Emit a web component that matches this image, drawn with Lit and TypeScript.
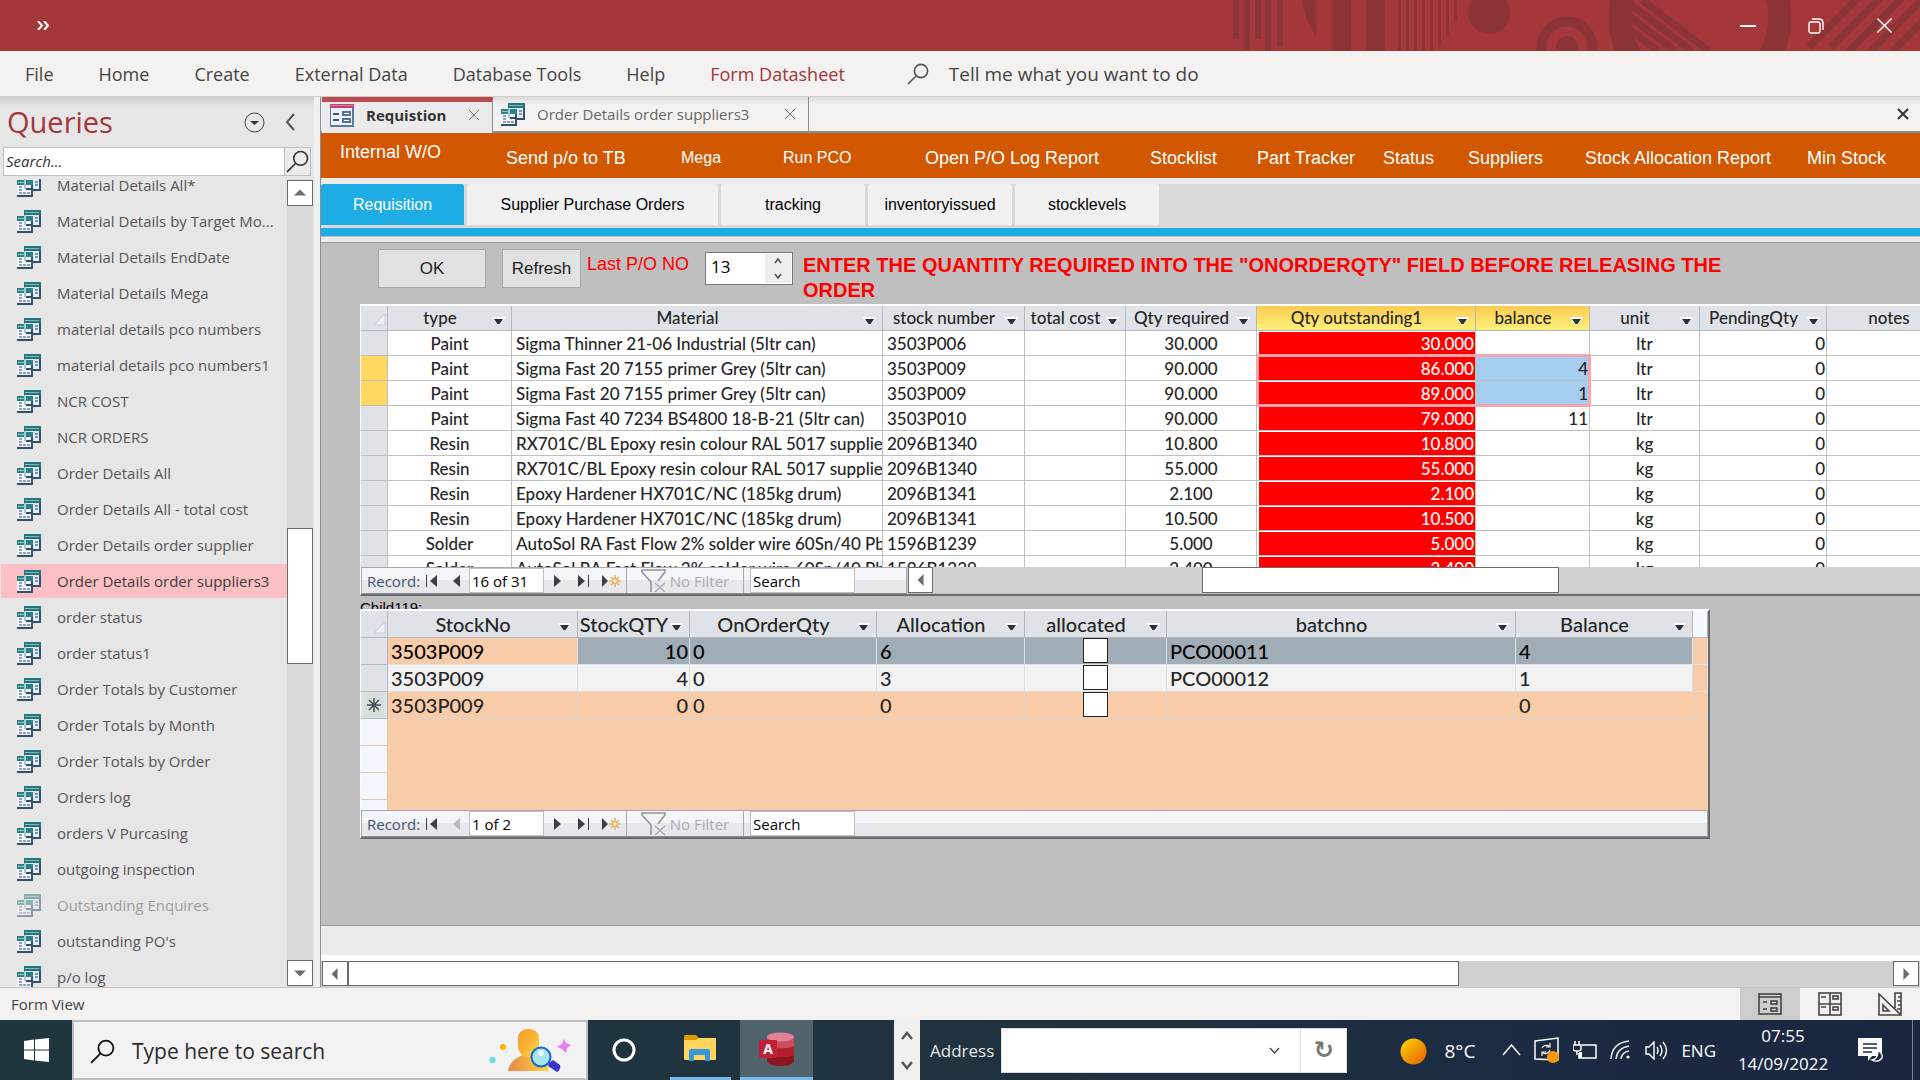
import { LitElement, html, css, svg, nothing } from "lit";
import { customElement } from "lit/decorators.js";
import { classMap } from "lit/directives/class-map.js";

const base = css`
  * { box-sizing: border-box; }
  button { border: 0; background: none; padding: 0; margin: 0; font: inherit; color: inherit; cursor: default; }
  input { border: 0; padding: 0; margin: 0; font: inherit; color: inherit; border-radius: 0; outline: 0; min-width: 0; }
  a { color: inherit; text-decoration: none; }
  svg { display: block; flex: none; }
`;

const queryIcon = html`<svg width="24" height="23" viewBox="0 0 24 23" shape-rendering="crispEdges">
  <rect x="7" y="0" width="17" height="17" fill="#34506f"/>
  <rect x="7" y="4" width="15" height="11" fill="#e4ebf7"/>
  <rect x="7" y="0" width="17" height="5" fill="#24757c"/>
  <rect x="8" y="2" width="14" height="1" fill="#7fb9b9"/>
  <g fill="#7f95bd"><rect x="18" y="7" width="3" height="2"/><rect x="18" y="10" width="3" height="2"/></g>
  <rect x="0" y="6" width="16" height="17" fill="#34506f"/>
  <rect x="0" y="10" width="14" height="11" fill="#f4f7fc"/>
  <rect x="0" y="6" width="16" height="5" fill="#2d8383"/>
  <rect x="1" y="8" width="8" height="1" fill="#8cc4c2"/>
  <rect x="7" y="5" width="2" height="10" fill="#b4c3de"/>
  <rect x="9" y="14" width="7" height="2" fill="#34506f"/>
  <g fill="#8fa2c6"><rect x="2" y="12" width="3" height="2"/><rect x="2" y="15" width="3" height="2"/><rect x="2" y="18" width="3" height="2"/><rect x="6" y="18" width="3" height="2"/><rect x="10" y="18" width="3" height="2"/></g>
</svg>`;

const formIcon = html`<svg width="24" height="23" viewBox="0 0 24 23">
  <rect x="0" y="0" width="24" height="23" fill="#5a76a6"/>
  <rect x="1" y="4" width="21" height="17" fill="#eef2fa"/>
  <rect x="0" y="0" width="24" height="4" fill="#c2406f"/>
  <rect x="1" y="1" width="22" height="1" fill="#dd86a3"/>
  <g fill="#3d5480"><rect x="3" y="9" width="6" height="2"/><rect x="3" y="15" width="6" height="2"/></g>
  <g fill="#fff" stroke="#5570a0" stroke-width="2"><rect x="13" y="8" width="7" height="3"/><rect x="13" y="15" width="7" height="3"/></g>
</svg>`;

const magnifier = (size: number, color: string) => html`<svg width=${size} height=${size} viewBox="0 0 22 22" fill="none" stroke=${color} stroke-width="1.6"><circle cx="14" cy="8" r="6.6"/><path d="M9.3 12.7 1 21"/></svg>`;

const cross = (size: number, color: string, w = 1) => html`<svg width=${size} height=${size} viewBox="0 0 12 12" stroke=${color} stroke-width=${w}><path d="M1 1 11 11M11 1 1 11"/></svg>`;

const arrow = (dir: string, color = "#6b6b6b") => {
  const d: Record<string, string> = { up: "M0 10 7 3 14 10Z", down: "M0 4 7 11 14 4Z", left: "M10 0 3 7 10 14Z", right: "M4 0 11 7 4 14Z" };
  return html`<svg width="12" height="12" viewBox="0 0 14 14" fill=${color}><path d=${d[dir]}/></svg>`;
};

const sortMark = html`<svg width="13" height="9" viewBox="0 0 13 9"><path d="M0 0H13V1L8 7H5L0 1Z" fill="#fff"/><path d="M2 2H11L7.5 7H5.5Z" fill="#2b313c"/></svg>`;

@customElement("record-nav")
class RecordNav extends LitElement {
  static properties = { position: {}, atStart: { type: Boolean } };
  declare position: string; declare atStart: boolean;
  static styles = [base, css`
    :host { display: flex; height: 27px; border: 1px solid #a5a9b5; border-bottom-color: #8c8f98; background: linear-gradient(#f4f5f8 50%, #e6e8ec 50%); font: 15px "Open Sans", sans-serif; color: #44546a; }
    .cell { display: flex; align-items: center; justify-content: center; }
    .label { width: 59px; padding-left: 5px; justify-content: flex-start; }
    .first { width: 22px; } .prev, .next { width: 26px; } .last, .new { width: 28px; }
    .box { height: 25px; border: 1px solid #bfbfbf; background: #fff; color: #000; padding: 0 2px; }
    .pos { width: 75px; } .find { width: 105px; margin-left: 6px; }
    .filter { width: 118px; gap: 4px; border: solid #a5a9b5; border-width: 0 1px; color: #a9acb2; }
    .find::placeholder { color: #000; opacity: 1; }
  `];
  render() {
    const p = this.atStart ? "#b5b9c0" : "#3b3f48";
    return html`
      <label class="cell label" for="pos">Record:</label>
      <button class="cell first" aria-label="First record"><svg width="12" height="12" viewBox="0 0 12 12" fill="#3b3f48"><path d="M0 0H1V12H0ZM11 0V12L4 6Z"/></svg></button>
      <button class="cell prev" aria-label="Previous record"><svg width="7" height="12" viewBox="0 0 7 12" fill=${p}><path d="M7 0V12L0 6Z"/></svg></button>
      <input class="box pos" id="pos" .value=${this.position}>
      <button class="cell next" aria-label="Next record"><svg width="7" height="12" viewBox="0 0 7 12" fill="#3b3f48"><path d="M0 0V12L7 6Z"/></svg></button>
      <button class="cell last" aria-label="Last record"><svg width="12" height="12" viewBox="0 0 12 12" fill="#3b3f48"><path d="M0 0V12L7 6ZM10 0H11V12H10Z"/></svg></button>
      <button class="cell new" aria-label="New record"><svg width="20" height="12" viewBox="0 0 20 12"><path d="M0 0V12L6 6Z" fill="#3b3f48"/><g stroke="#e9b665" stroke-width="1.6" fill="#fff"><path d="M13 0V12M7 6H19M9 2 17 10M17 2 9 10"/><circle cx="13" cy="6" r="2.4"/></g></svg></button>
      <button class="cell filter"><svg width="25" height="24" viewBox="0 0 25 24" fill="none" stroke="#8f9298" stroke-width="1.5"><path d="M10 23V13L1 3V1H24V3L17 12"/><path d="M14 14 24 23M24 14 14 23" stroke="#a9acb2"/></svg>No Filter</button>
      <input class="box find" aria-label="Search records" placeholder="Search">
    `;
  }
}

const materialRows: string[][] = [
  ["Paint", "Sigma Thinner 21-06 Industrial (5ltr can)", "3503P006", "", "30.000", "30.000", "", "ltr", "0", ""],
  ["Paint", "Sigma Fast 20 7155 primer Grey (5ltr can)", "3503P009", "", "90.000", "86.000", "4", "ltr", "0", ""],
  ["Paint", "Sigma Fast 20 7155 primer Grey (5ltr can)", "3503P009", "", "90.000", "89.000", "1", "ltr", "0", ""],
  ["Paint", "Sigma Fast 40 7234 BS4800 18-B-21 (5ltr can)", "3503P010", "", "90.000", "79.000", "11", "ltr", "0", ""],
  ["Resin", "RX701C/BL Epoxy resin colour RAL 5017 supplied", "2096B1340", "", "10.800", "10.800", "", "kg", "0", ""],
  ["Resin", "RX701C/BL Epoxy resin colour RAL 5017 supplied", "2096B1340", "", "55.000", "55.000", "", "kg", "0", ""],
  ["Resin", "Epoxy Hardener HX701C/NC (185kg drum)", "2096B1341", "", "2.100", "2.100", "", "kg", "0", ""],
  ["Resin", "Epoxy Hardener HX701C/NC (185kg drum)", "2096B1341", "", "10.500", "10.500", "", "kg", "0", ""],
  ["Solder", "AutoSol RA Fast Flow 2% solder wire 60Sn/40 Pb", "1596B1239", "", "5.000", "5.000", "", "kg", "0", ""],
  ["Solder", "AutoSol RA Fast Flow 2% solder wire 60Sn/40 Pb", "1596B1239", "", "2.400", "2.400", "", "kg", "0", ""],
];
const materialCols: [string, number, string][] = [
  ["type", 124, "mid"], ["Material", 371, ""], ["stock number", 142, ""], ["total cost", 101, ""], ["Qty required", 131, "mid"],
  ["Qty outstanding1", 219, "end red"], ["balance", 114, "end"], ["unit", 110, "mid"], ["PendingQty", 127, "end"], ["notes", 144, ""],
];

@customElement("material-sheet")
class MaterialSheet extends LitElement {
  static styles = [base, css`
    :host { display: block; border: 2px solid #fff; border-left-width: 1px; border-right: 0; border-bottom: 2px solid #6c6c6c; font: 500 17px "Comic Sans MS", Lato, sans-serif; color: #262626; overflow: hidden; }
    .view { height: 261px; overflow: hidden; background: #fff; }
    table { table-layout: fixed; width: 0; border-collapse: separate; border-spacing: 0; }
    th, td { height: 25px; padding: 2px 4px 0; line-height: 22px; border: solid #bfbfbf; border-width: 0 1px 1px 0; white-space: nowrap; overflow: hidden; text-align: left; font-weight: inherit; }
    th { background: #dfe3e8; border-color: #b4b8be; padding: 0; }
    .sel { background: #dfe3e8; }
    .head { display: flex; align-items: center; padding-right: 6px; }
    .head button { flex: 1; text-align: center; }
    .head svg { margin-top: 6px; }
    .gold { background: linear-gradient(#fdcb4f, #fff07c); }
    .mid { text-align: center; }
    .end { text-align: right; padding-right: 1px; }
    .red { background: #f00; color: #fff; box-shadow: inset 2px 1px 0 #fff; padding-right: 1px; position: relative; overflow: visible; }
    .picked { background: #a5cdf0; }
    .mark { background: #ffd85f; }
    .outline { position: absolute; z-index: 1; left: -1px; top: -2px; width: 335px; height: 53px; border: 3px solid #f7a5ab; }
    .foot { display: flex; }
    record-nav { width: 546px; }
    .scroll { flex: 1; display: flex; background: #d0d0d0; padding-left: 1px; height: 26px; }
    .scroll button { width: 25px; background: #fff; border: 1px solid #6b6b6b; display: flex; align-items: center; justify-content: center; }
    .track { flex: 1; display: grid; grid-template-columns: 269fr 357fr 361fr; }
    .thumb { grid-column: 2; background: #fff; border: 1px solid #6b6b6b; }
  `];
  render() {
    return html`
      <div class="view"><table>
        <colgroup><col style="width:27px">${materialCols.map(c => html`<col style="width:${c[1]}px">`)}</colgroup>
        <thead><tr><th class="sel"><svg width="27" height="22" viewBox="0 0 27 22"><path d="M13 18 24 7V18Z" fill="#eef1f8" stroke="#c5cddd"/></svg></th>
          ${materialCols.map((c, i) => html`<th class=${classMap({ gold: i === 5 || i === 6 })}><span class="head"><button>${c[0]}</button>${sortMark}</span></th>`)}</tr></thead>
        <tbody>${materialRows.map((r, y) => {
          const hot = y === 1 || y === 2;
          return html`<tr><td class="sel ${hot ? "mark" : ""}"></td>${r.map((v, x) => html`<td class="${materialCols[x][2]} ${hot && x === 6 ? "picked" : ""}">${v}${y === 1 && x === 5 ? html`<span class="outline"></span>` : nothing}</td>`)}</tr>`;
        })}</tbody>
      </table></div>
      <div class="foot"><record-nav position="16 of 31"></record-nav>
        <div class="scroll"><button aria-label="Scroll left">${arrow("left")}</button><div class="track"><div class="thumb"></div></div></div></div>
    `;
  }
}

const stockCols: [string, number, string][] = [
  ["StockNo", 190, ""], ["StockQTY", 112, "end"], ["OnOrderQty", 187, ""], ["Allocation", 148, ""], ["allocated", 142, "mid"], ["batchno", 349, ""], ["Balance", 177, ""],
];
const stockRows: (string | boolean)[][] = [
  ["3503P009", "10", "0", "6", false, "PCO00011", "4"],
  ["3503P009", "4", "0", "3", false, "PCO00012", "1"],
  ["3503P009", "0", "0", "0", false, "", "0"],
];

@customElement("stock-sheet")
class StockSheet extends LitElement {
  static styles = [base, css`
    :host { display: block; width: 1350px; border: 2px solid #fff; border-left-width: 1px; border-right-color: #6c6c6c; border-bottom-color: #6c6c6c; font: 500 20px Lato, sans-serif; color: #262626; }
    .view { height: 199px; overflow: hidden; background: #f8cba9; }
    table { table-layout: fixed; width: 100%; border-collapse: separate; border-spacing: 0; }
    th, td { height: 27px; padding: 0 3px; line-height: 26px; border: solid #e3d3c8; border-width: 0 1px 1px 0; white-space: nowrap; overflow: hidden; text-align: left; font-weight: inherit; }
    th { background: #dfe3e8; border-color: #b4b8be; padding: 0; }
    td { background: #f8cba9; }
    .head { display: flex; align-items: center; padding-right: 6px; }
    .head button { flex: 1; text-align: center; }
    .head svg { margin-top: 6px; }
    .tail { background: #f5f7ff; }
    .end { text-align: right; padding-right: 1px; }
    .mid { text-align: center; }
    .current td { background: #a1adb6; color: #000; border-color: #dfe3e8; }
    .current td.no, td.no { background: #f8cba9; }
    .alt td, .alt td.no { background: #f2f2f2; border-color: #dcdfe3; }
    tr td.sel { background: #dfe3e8; border-color: #b4b8be; padding: 0; }
    tr td.pad { background: #f8cba9; }
    .blank td { border-color: #f0cdb3; }
    .blank td.sel { background: #f5f7ff; border-color: #e6c3ab; }
    .star { margin: 0 auto; background: #d5e0dd; }
    input { appearance: none; width: 25px; height: 25px; border: 1px solid #222; background: #fff; vertical-align: top; }
  `];
  render() {
    return html`
      <div class="view"><table>
        <colgroup><col style="width:27px">${stockCols.map(c => html`<col style="width:${c[1]}px">`)}<col></colgroup>
        <thead><tr><th><svg width="27" height="26" viewBox="0 0 27 26"><path d="M13 22 24 11V22Z" fill="#eef1f8" stroke="#c5cddd"/></svg></th>${stockCols.map(c => html`<th><span class="head"><button>${c[0]}</button>${sortMark}</span></th>`)}<th class="tail"></th></tr></thead>
        <tbody>
          ${stockRows.map((r, y) => html`<tr class=${["current", "alt", "fresh"][y]}><td class="sel">${y === 2 ? html`<svg class="star" width="20" height="24" viewBox="0 0 20 24" stroke="#4a4f55" stroke-width="1.5"><path d="M10 5V19M3 12H17M5 7 15 17M15 7 5 17"/></svg>` : nothing}</td>
            ${r.map((v, x) => html`<td class="${stockCols[x][2]} ${x === 0 ? "no" : ""}">${typeof v === "string" ? v : html`<input type="checkbox" aria-label="allocated" .checked=${v}>`}</td>`)}<td class="pad"></td></tr>`)}
          ${[0, 1, 2, 3].map(() => html`<tr class="blank"><td class="sel"></td>${stockCols.map(() => html`<td></td>`)}<td></td></tr>`)}
        </tbody>
      </table></div>
      <record-nav position="1 of 2" atStart></record-nav>
    `;
  }
}

const queries = ["Material Details All*", "Material Details by Target Mo...", "Material Details EndDate", "Material Details Mega", "material details pco numbers", "material details pco numbers1", "NCR COST", "NCR ORDERS", "Order Details All", "Order Details All - total cost", "Order Details order supplier", "Order Details order suppliers3", "order status", "order status1", "Order Totals by Customer", "Order Totals by Month", "Order Totals by Order", "Orders log", "orders V Purcasing", "outgoing inspection", "Outstanding Enquires", "outstanding PO's", "p/o log"];

@customElement("query-pane")
class QueryPane extends LitElement {
  static styles = [base, css`
    :host { display: flex; flex-direction: column; width: 314px; background: linear-gradient(#cfcfcf, #e6e6e6 10px); font: 15px "Open Sans", sans-serif; color: #555; overflow: hidden; }
    .title { display: flex; align-items: center; height: 50px; padding: 0 19px 0 7px; gap: 20px; }
    h1 { flex: 1; margin: 0; font-weight: 400; font-size: 29px; line-height: 50px; color: #a4373a; }
    .find { display: flex; margin: 0 3px; height: 29px; border: 1px solid #bfbfbf; }
    .find input { flex: 1; background: #fff; padding: 0 2px 2px; font-style: italic; }
    .find input::placeholder { color: #333; opacity: 1; }
    .find button { width: 26px; border-left: 1px solid #bfbfbf; background: #ebebeb; display: flex; align-items: center; justify-content: center; }
    .body { flex: 1; display: flex; min-height: 0; margin-top: 3px; padding-left: 1px; }
    ul { flex: 1; margin: 0; padding: 0; list-style: none; overflow: hidden; display: flex; flex-direction: column; justify-content: flex-end; }
    li { flex: none; height: 36px; padding: 1px 0; }
    li a { display: flex; align-items: center; height: 34px; padding: 0 0 0 16px; gap: 16px; white-space: nowrap; }
    li:last-child { height: 28px; overflow: hidden; }
    .on { background: #fcc0c4; color: #3d3d3d; }
    .off { opacity: .5; }
    .bar { width: 26px; margin-right: 1px; background: #d9d9d9; display: grid; grid-template-rows: 26px 323fr 136fr 297fr 26px; padding: 1px 0; }
    .bar button, .thumb { background: #fff; border: 1px solid #6b6b6b; display: flex; align-items: center; justify-content: center; }
    .thumb { grid-row: 3; } .down { grid-row: 5; }
  `];
  render() {
    return html`
      <div class="title"><h1>Queries</h1>
        <button aria-label="Choose group"><svg width="21" height="21" viewBox="0 0 21 21"><circle cx="10.500" cy="10.500" r="9.500" fill="none" stroke="#444"/><path d="M6 9H15L10.500 13Z" fill="#333"/></svg></button>
        <button aria-label="Collapse pane"><svg width="10" height="18" viewBox="0 0 10 18" fill="none" stroke="#555" stroke-width="2"><path d="M9 1 2 9 9 17"/></svg></button></div>
      <div class="find"><input aria-label="Search queries" placeholder="Search..."><button aria-label="Search">${magnifier(23, "#333")}</button></div>
      <div class="body"><ul>${queries.map(q => html`<li><a href="#" class=${classMap({ on: q === "Order Details order suppliers3", off: q === "Outstanding Enquires" })}>${queryIcon}<span>${q}</span></a></li>`)}</ul>
        <div class="bar"><button aria-label="Scroll up">${arrow("up")}</button><div class="thumb"></div><button class="down" aria-label="Scroll down">${arrow("down")}</button></div></div>
    `;
  }
}

@customElement("task-bar")
class TaskBar extends LitElement {
  static styles = [base, css`
    :host { display: flex; height: 60px; background: linear-gradient(90deg, #20363f, #20333f 50%, #1b2b42 80%, #1a2640); font: 17px "Open Sans", sans-serif; color: #fff; }
    button, .cell { display: flex; align-items: center; justify-content: center; flex: none; }
    .start { width: 72px; }
    .search { width: 516px; border: 2px solid #bfbfbf; background: #f2f2f2; display: flex; align-items: center; padding: 2px 15px 0 16px; gap: 17px; color: #222; font-size: 21px; }
    .search input { flex: 1; background: none; }
    .search input::placeholder { color: #2b2b2b; opacity: 1; }
    .ring { width: 72px; } .files { width: 80px; }
    .app { width: 73px; background: #50626a; border-bottom: 3px solid #76b9ed; }
    .files span { width: 61px; height: 60px; border-bottom: 3px solid #76b9ed; display: flex; align-items: center; justify-content: center; }
    .strip { margin-left: 81px; width: 26px; background: #f0f0f0; display: flex; flex-direction: column; }
    .strip button { flex: 1; }
    .address { display: flex; align-items: center; margin-left: 10px; color: #e4e8ea; }
    .combo { display: flex; height: 45px; margin-left: 7px; background: #fff; border: 1px solid #ddd; color: #222; }
    .combo input { width: 246px; padding: 0 6px; }
    .drop { width: 52px; } .reload { width: 46px; border-left: 1px solid #ddd; font: 700 24px "DejaVu Sans", sans-serif; color: #777; }
    .gap { flex: 1; }
    .weather { gap: 17px; margin-right: 27px; font-size: 19px; padding-top: 2px; }
    .tray { gap: 13px; margin-right: 19px; }
    .clock { flex-direction: column; line-height: 28px; width: 96px; margin-right: 27px; }
    .edge { width: 8px; border-left: 1px solid #7b8494; margin-left: 29px; }
  `];
  render() {
    return html`
      <button class="start" aria-label="Start"><svg width="25" height="24" viewBox="0 0 25 24" fill="#fff"><path d="M0 3 10 1.500V11.500H0ZM11 1.400 25 0V11.500H11ZM0 12.500H10V22.500L0 21ZM11 12.500H25V24L11 22.600Z"/></svg></button>
      <div class="search">${magnifier(25, "#111")}<input aria-label="Type here to search" placeholder="Type here to search">
        <svg width="82" height="46" viewBox="0 0 82 46">
          <defs><linearGradient id="body" x1="0" y1="0" x2="1" y2="1"><stop offset="0" stop-color="#f49a2c"/><stop offset=".5" stop-color="#f9b233"/><stop offset="1" stop-color="#ffe14d"/></linearGradient>
          <linearGradient id="base" x1="0" x2="1"><stop offset="0" stop-color="#e8874a"/><stop offset="1" stop-color="#ffd83c"/></linearGradient></defs>
          <circle cx="14" cy="19" r="3" fill="#ffb000"/><circle cx="3.500" cy="32" r="3.200" fill="#6fdbe8"/>
          <path d="M19 43C20 35 26 30 34 27H50C56 31 59 36 60 43Z" fill="url(#base)"/>
          <path d="M29 10C29 -2 50 -2 50 10V22C50 26 47 29 44 29H36C31 26 29 22 29 18Z" fill="url(#body)"/>
          <path d="M60 35 64 32 71 37C72 40 70 43 68 44L59 38Z" fill="#3b34cf"/>
          <circle cx="52" cy="29" r="9.500" fill="#a9e4f5" stroke="#1565d8" stroke-width="2"/><circle cx="52" cy="25" r="3" fill="#e8fbff"/>
          <path d="M75 11 77 15 82 17 78 20 77 25 73 21 68 19 73 16Z" fill="#e77cf5"/>
        </svg></div>
      <button class="ring" aria-label="Cortana"><svg width="24" height="24" viewBox="0 0 24 24"><circle cx="12" cy="12" r="10" fill="none" stroke="#fff" stroke-width="3"/></svg></button>
      <button class="files" aria-label="File Explorer"><span><svg width="32" height="27" viewBox="0 0 32 27"><path d="M0 1Q0 0 1 0H12L15 3V6H0Z" fill="#dd9a00"/><path d="M0 5H12L15 3H31Q32 3 32 4V24Q32 25 31 25H1Q0 25 0 24Z" fill="#ffd45e"/><path d="M5 26V16Q5 14 7 14H24Q26 14 26 16V26H21V20H10V26Z" fill="#3a96dd"/></svg></span></button>
      <button class="app" aria-label="Access"><svg width="36" height="34" viewBox="0 0 36 34"><path d="M8 5V28C8 32 14 34 21.500 34S35 32 35 28V5Z" fill="#8c1520"/><path d="M8 5V23C12 26 31 26 35 23V5Z" fill="#b31e2e"/><path d="M8 5V14C12 17 31 17 35 14V5Z" fill="#cc4b5d"/><ellipse cx="21.500" cy="5" rx="13.500" ry="4.600" fill="#e08395"/><rect x="0" y="8" width="18" height="18" rx="1" fill="#c02036"/><text x="9" y="22" text-anchor="middle" font-family="Open Sans, sans-serif" font-weight="700" font-size="14" fill="#fff">A</text></svg></button>
      <div class="strip"><button aria-label="Scroll taskbar up"><svg width="12" height="9" viewBox="0 0 12 9" fill="none" stroke="#555" stroke-width="2.500"><path d="M1 8 6 2 11 8"/></svg></button><button aria-label="Scroll taskbar down"><svg width="12" height="9" viewBox="0 0 12 9" fill="none" stroke="#555" stroke-width="2.500"><path d="M1 1 6 7 11 1"/></svg></button></div>
      <div class="address"><label for="address">Address</label><div class="combo"><input id="address"><button class="drop" aria-label="Recent addresses"><svg width="11" height="7" viewBox="0 0 11 7" fill="none" stroke="#444" stroke-width="1.300"><path d="M1 1 5.500 6 10 1"/></svg></button><button class="reload" aria-label="Refresh">↻</button></div></div>
      <div class="gap"></div>
      <button class="weather"><svg width="27" height="27" viewBox="0 0 27 27"><defs><linearGradient id="sun" x1="0" y1="0" x2="1" y2="1"><stop offset="0" stop-color="#ffd800"/><stop offset="1" stop-color="#e65c00"/></linearGradient></defs><circle cx="13.500" cy="13.500" r="13" fill="url(#sun)"/></svg>8°C</button>
      <div class="cell tray">
        <svg width="19" height="12" viewBox="0 0 19 12" fill="none" stroke="#fff" stroke-width="1.500"><path d="M1 11 9.500 1 18 11"/></svg>
        <svg width="26" height="26" viewBox="0 0 26 26" fill="none" stroke="#fff" stroke-width="1.500"><path d="M1 4 24 1V23L1 22Z"/><path d="M8 11A5 5 0 0 1 15 9M16 6V10H12M16 13A5 5 0 0 1 9 16M8 19V15H12" stroke-width="1.200"/><circle cx="19" cy="20" r="6" fill="#ff9800" stroke="none"/></svg>
        <svg width="24" height="18" viewBox="0 0 24 18" fill="none" stroke="#fff" stroke-width="1.500"><path d="M9 4H23V17H6V12"/><path d="M2 0V4M6 0V4M0 4H8V8Q8 10 4 10Q0 10 0 8ZM4 10V14"/><rect x="6" y="11" width="3" height="6" fill="#fff" stroke="none"/></svg>
        <svg width="22" height="20" viewBox="0 0 22 20" fill="none" stroke="#e4e6ea" stroke-width="1.500"><path d="M1 19Q2 3 19 1M6 19Q7 8 19 6M11 19Q12 12 19 11"/><circle cx="18" cy="17" r="1.600" fill="#fff" stroke="none"/></svg>
        <svg width="23" height="19" viewBox="0 0 23 19" fill="none" stroke="#fff" stroke-width="1.400"><path d="M1 6H4L9 1V18L4 13H1ZM12 6Q14 9.500 12 13M15 4Q19 9.500 15 15M18 1Q25 9.500 18 18"/></svg>
        <span>ENG</span>
      </div>
      <div class="cell clock"><span>07:55</span><span>14/09/2022</span></div>
      <button aria-label="Notifications"><svg width="25" height="25" viewBox="0 0 25 25"><path d="M0 0H24V18H14L10 23V18H0Z" fill="#fff"/><path d="M5 6H19M5 10H19M5 14H14" stroke="#1b2740" stroke-width="1.500"/><path d="M20 13Q25 15 24 20Q20 25 14 22Q20 21 20 13Z" fill="#1b2740" stroke="#fff" stroke-width="1.300"/></svg></button>
      <div class="edge"></div>
    `;
  }
}

const art = svg`
  <g fill="#8c3335">
    <rect x="13" y="0" width="6" height="39"/><rect x="24" y="0" width="6" height="50"/><rect x="35" y="0" width="6" height="39"/><rect x="45" y="0" width="6" height="51"/><rect x="57" y="0" width="6" height="46"/>
    <path d="M82 0H96V36Q84 18 82 0Z"/><rect x="112" y="0" width="19" height="51"/><rect x="146" y="0" width="19" height="51"/>
    <path d="M178 0h3v51h-3zM186 0h3v51h-3zM194 0h3v51h-3zM202 0h3v51h-3zM210 0h3v51h-3zM218 0h3v45l-3 3zM226 0h3v34l-3 4zM234 0h3v18l-3 7z"/>
    <circle cx="269" cy="13" r="21"/><circle cx="347" cy="47" r="11"/>
  </g>
  <g fill="none" stroke="#8c3335">
    <circle cx="347" cy="47" r="25.500" stroke-width="10"/><circle cx="480" cy="17" r="80" stroke-width="23"/>
    <g stroke-width="7" clip-path="url(#disc)"><path d="M422 0 489 51M405 0 472 51M388 0 455 51M371 0 438 51"/></g>
    <g stroke-width="7"><path d="M589 47 641 -5M611 47 663 -5M623 57 685 -5M645 57 707 -5M667 57 720 4"/></g>
  </g>`;

const menu = ["File", "Home", "Create", "External Data", "Database Tools", "Help"];
const actions = ["Internal W/O", "Send p/o to TB", "Mega", "Run PCO", "Open P/O Log Report", "Stocklist", "Part Tracker", "Status", "Suppliers", "Stock Allocation Report", "Min Stock"];

@customElement("app-root")
export class AppRoot extends LitElement {
  static styles = [base, css`
    :host { display: flex; flex-direction: column; height: 100vh; overflow: hidden; background: #f3f2f0; font: 18px "Open Sans", sans-serif; color: #444; }
    .title { position: relative; display: flex; align-items: center; justify-content: space-between; height: 51px; background: #a4373a; color: #fff; flex: none; }
    .art { position: absolute; right: 0; top: 0; }
    .more { padding-left: 37px; }
    .window { position: relative; display: flex; gap: 52px; padding-right: 27px; align-items: center; }
    .menu { display: flex; align-items: center; height: 46px; flex: none; padding-left: 25px; gap: 45px; border-bottom: 1px solid #cfcfcf; }
    .menu .ctx { color: #a4373a; }
    .tell { display: flex; align-items: center; gap: 20px; margin-left: 17px; font-size: 19px; }
    .tell input { width: 300px; background: none; }
    .tell input::placeholder { color: #444; opacity: 1; }
    .work { flex: 1; display: flex; min-height: 0; }
    .split { width: 6px; background: #f0f0f0; }
    main { flex: 1; min-width: 0; display: flex; flex-direction: column; border-left: 1px solid #8b8e98; background: #ebebeb; overflow: hidden; }
    .docs { display: flex; height: 36px; flex: none; background: linear-gradient(#dcdcdb, #f3f2f0 8px); font-size: 15px; border-bottom: 2px solid #8b8e98; }
    .doc { display: flex; align-items: center; border-right: 1px solid #8b8e98; padding: 0 12px 0 8px; gap: 12px; }
    .doc span { flex: 1; white-space: nowrap; }
    .doc.on { width: 171px; height: 36px; border-top: 5px solid #b94a50; background: #ebebeb; font-weight: 700; color: #333; margin-left: 1px; padding: 0 12px 5px 8px; }
    .doc.off { width: 316px; color: #666; }
    .shut { margin-left: auto; padding-right: 11px; display: flex; align-items: center; }
    .actions { display: grid; grid-template-columns: 166px 175px 102px 142px 225px 107px 126px 85px 117px 222px auto; align-items: center; height: 45px; flex: none; padding: 5px 0 0 19px; background: #d15700; color: #fff; font: 18px "Liberation Sans", sans-serif; }
    .actions button { text-align: left; white-space: nowrap; justify-self: start; }
    .actions .small { font-size: 16px; }
    .actions .high { align-self: start; padding-top: 4px; }
    .tabs { display: flex; gap: 3px; height: 44px; flex: none; margin-top: 6px; padding-bottom: 3px; background: #d9d9d9; font: 16px "Liberation Sans", sans-serif; color: #000; }
    .tabs button { width: 144px; background: #f1f1f1; border-radius: 3px 3px 0 0; }
    .tabs .on { background: #1eace4; color: #fff; width: 143px; }
    .tabs .wide { width: 251px; }
    .rule { height: 9px; flex: none; background: #1eace4; border-bottom: 1px solid #b9c5ca; }
    .form { flex: 1; min-height: 0; margin-top: 5px; background: #bfbfbf; border: solid #9a9a9a; border-width: 1px 0; padding-left: 39px; overflow: hidden; }
    .head { display: flex; align-items: flex-start; height: 61px; padding: 6px 0 0 18px; font: 17px "Liberation Sans", sans-serif; color: #222; }
    .push { height: 39px; border: 1px solid #a8a8a8; background: #e1e1e1; }
    .ok { width: 108px; margin-right: 16px; } .refresh { width: 79px; }
    .last { color: #f00; margin: 5px 14px 0 6px; font-size: 18px; white-space: nowrap; width: 104px; }
    .spin { display: flex; width: 88px; height: 33px; margin: 3px 10px 0 0; background: #fff; border: 1px solid #77777f; padding: 1px; font: 17px "Open Sans", sans-serif; flex: none; }
    .spin input { width: 58px; padding: 0 4px 4px; color: #000; appearance: textfield; }
    .spin input::-webkit-inner-spin-button { appearance: none; }
    .spin div { flex: 1; display: flex; flex-direction: column; background: #ededed; }
    .spin button { flex: 1; display: flex; align-items: center; justify-content: center; }
    .warn { margin: 4px 0 0; max-width: 960px; font-weight: 700; font-size: 20px; line-height: 25px; color: #f00; }
    .child { display: block; height: 13px; padding-top: 3px; overflow: hidden; font: 15px/17px "Liberation Sans", sans-serif; color: #000; }
    .below { height: 29px; flex: none; }
    .hbar { display: grid; grid-template-columns: 26px 1112fr 435fr 26px; height: 32px; flex: none; border-top: 6px solid #fff; background: #d0d0d0; padding: 0 1px 1px; }
    .hbar button, .hbar .thumb { border: 1px solid #6b6b6b; background: #fff; display: flex; align-items: center; justify-content: center; }
    .hbar .r { grid-column: 4; }
    .status { display: flex; align-items: center; height: 33px; flex: none; border-top: 1px solid #c6c6c6; padding-left: 11px; font-size: 15px; }
    .status span { flex: 1; }
    .status button { width: 60px; height: 100%; display: flex; align-items: center; justify-content: center; }
    .status .on { background: #cdcdcb; }
    task-bar { flex: none; }
  `];
  render() {
    return html`
      <header class="title">
        <svg class="art" width="700" height="51" viewBox="0 0 700 51"><defs><clipPath id="disc"><circle cx="480" cy="17" r="69"/></clipPath></defs>${art}</svg>
        <button class="more" aria-label="More commands"><svg width="13" height="9" viewBox="0 0 13 9" fill="none" stroke="#fff" stroke-width="2"><path d="M1 0 5 4.500 1 9M7 0 11 4.500 7 9"/></svg></button>
        <div class="window">
          <button aria-label="Minimize"><svg width="16" height="2"><rect width="16" height="2" fill="#fff"/></svg></button>
          <button aria-label="Restore"><svg width="16" height="16" viewBox="0 0 16 16" fill="none" stroke="#fff" stroke-width="1.400"><rect x="1" y="4" width="11" height="11" rx="2"/><path d="M4 1H11Q15 1 15 5V12"/></svg></button>
          <button aria-label="Close">${cross(17, "#fff", 1)}</button>
        </div>
      </header>
      <nav class="menu">${menu.map(m => html`<button>${m}</button>`)}<button class="ctx">Form Datasheet</button>
        <div class="tell">${magnifier(22, "#555")}<input aria-label="Tell me what you want to do" placeholder="Tell me what you want to do"></div></nav>
      <div class="work">
        <query-pane></query-pane><div class="split"></div>
        <main>
          <div class="docs">
            <div class="doc on">${formIcon}<span>Requistion</span><button aria-label="Close Requistion">${cross(12, "#777", 1)}</button></div>
            <div class="doc off">${queryIcon}<span>Order Details order suppliers3</span><button aria-label="Close Order Details">${cross(12, "#777", 1)}</button></div>
            <button class="shut" aria-label="Close document">${cross(12, "#333", 2)}</button>
          </div>
          <div class="actions">${actions.map((a, i) => html`<button class=${classMap({ high: i === 0, small: i === 2 || i === 3 })}>${a}</button>`)}</div>
          <div class="tabs"><button class="on">Requisition</button><button class="wide">Supplier Purchase Orders</button><button>tracking</button><button>inventoryissued</button><button>stocklevels</button></div>
          <div class="rule"></div>
          <div class="form">
            <div class="head"><button class="push ok">OK</button><button class="push refresh">Refresh</button>
              <label class="last" for="po">Last P/O NO</label>
              <div class="spin"><input id="po" type="number" value="13"><div>
                <button aria-label="Increase"><svg width="8" height="6" viewBox="0 0 8 6" fill="none" stroke="#555" stroke-width="1.600"><path d="M1 5 4 1 7 5"/></svg></button>
                <button aria-label="Decrease"><svg width="8" height="6" viewBox="0 0 8 6" fill="none" stroke="#555" stroke-width="1.600"><path d="M1 1 4 5 7 1"/></svg></button></div></div>
              <p class="warn">ENTER THE QUANTITY REQUIRED INTO THE "ONORDERQTY" FIELD BEFORE RELEASING THE ORDER</p></div>
            <material-sheet></material-sheet>
            <span class="child">Child119:</span>
            <stock-sheet></stock-sheet>
          </div>
          <div class="below"></div>
          <div class="hbar"><button aria-label="Scroll left">${arrow("left")}</button><div class="thumb"></div><button class="r" aria-label="Scroll right">${arrow("right")}</button></div>
        </main>
      </div>
      <footer class="status"><span>Form View</span>
        <button class="on" aria-label="Form View"><svg width="24" height="22" viewBox="0 0 24 22" fill="none" stroke="#444" stroke-width="1.600"><rect x="1" y="1" width="22" height="20"/><path d="M1 4H23M5 9H9M5 16H9"/><rect x="13" y="8" width="6" height="3"/><rect x="13" y="15" width="6" height="3"/></svg></button>
        <button aria-label="Layout View"><svg width="24" height="24" viewBox="0 0 24 24" fill="none" stroke="#444" stroke-width="1.600"><rect x="1" y="1" width="22" height="22"/><path d="M12 1V23M1 12H23M3 5H8M3 15H8"/><rect x="15" y="4" width="5" height="3"/><rect x="15" y="15" width="5" height="3"/></svg></button>
        <button aria-label="Design View"><svg width="24" height="24" viewBox="0 0 24 24" fill="none" stroke="#444" stroke-width="1.600"><path d="M1 2 23 23H1ZM5 13 11 19H5ZM17 16V1H23V22M20 5H23M19 9H23M20 13H23M19 17H23"/></svg></button>
      </footer>
      <task-bar></task-bar>
    `;
  }
}
